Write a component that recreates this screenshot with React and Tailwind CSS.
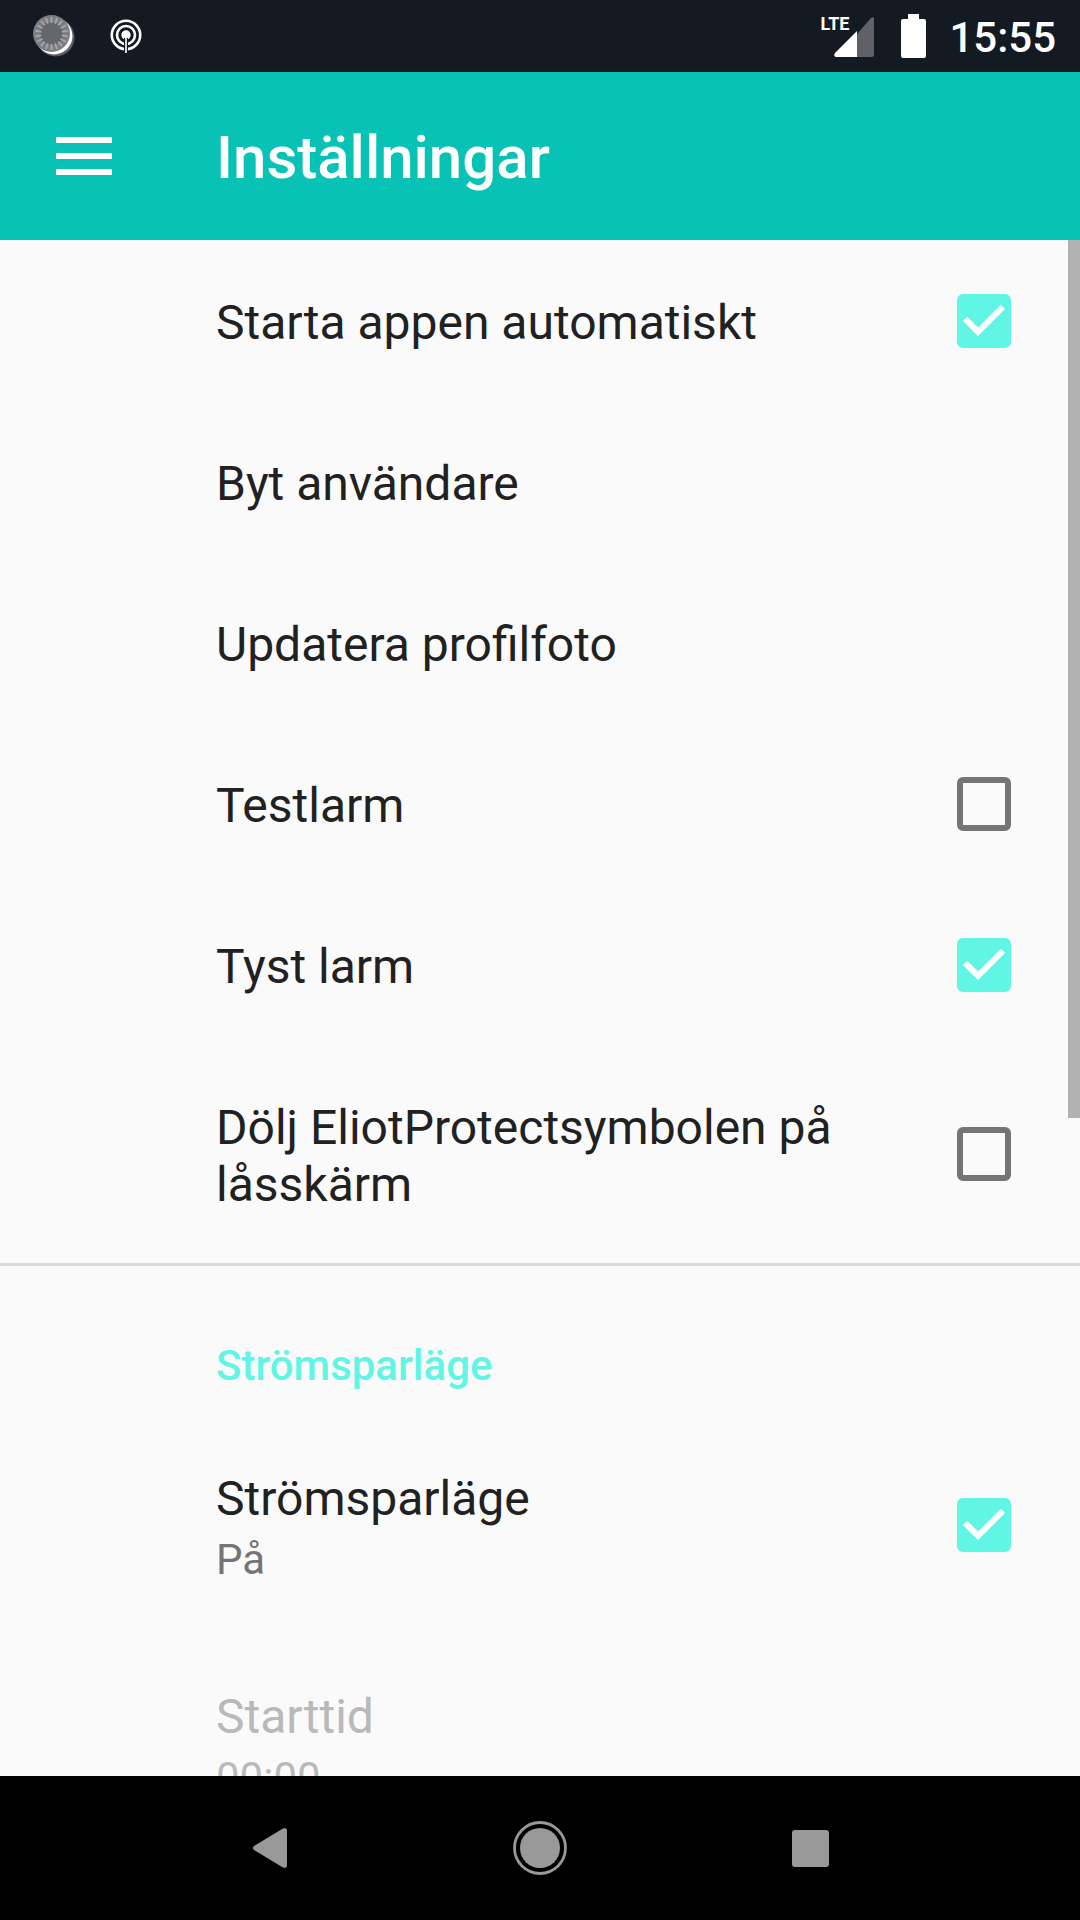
import React, { useState } from 'react';

const items = [
    { id: 'autostart', title: 'Starta appen automatiskt', checkbox: true },
    { id: 'switch-user', title: 'Byt användare' },
    { id: 'photo', title: 'Updatera profilfoto' },
    { id: 'test-alarm', title: 'Testlarm', checkbox: true },
    { id: 'silent-alarm', title: 'Tyst larm', checkbox: true },
    { id: 'hide-symbol', title: 'Dölj EliotProtectsymbolen på låsskärm', checkbox: true },
];

const powerItems = [
    { id: 'power-save', title: 'Strömsparläge', checkbox: true, summary: 'På' },
    { id: 'start-time', title: 'Starttid', summary: '00:00', disabled: true },
];

const ticks = Array.from({ length: 18 }, (_, i) => i * 20);

const StatusBar = () => (
    <div className="flex h-[72px] shrink-0 items-center justify-between bg-[#141a22] pr-6 pl-8 text-white">
        <div className="flex items-center gap-8">
            <svg className="h-12 w-11" viewBox="0 0 44 48" aria-hidden="true">
                <circle cx="23.500" cy="25.500" r="19" fill="#5a5e63" />
                <circle cx="22" cy="24" r="18.500" fill="#fff" />
                <circle cx="19.500" cy="21.500" r="18.500" fill="#7b7d80" />
                <circle cx="19.500" cy="21.500" r="12" fill="#65676a" />
                {ticks.map((angle) => (
                    <path key={angle} d="M19.500 5v6" stroke="#a5a6a8" strokeWidth="2" transform={`rotate(${angle} 19.5 21.5)`} />
                ))}
            </svg>
            <svg className="h-9 w-9" viewBox="0 0 36 36" fill="none" stroke="#fff" aria-hidden="true">
                <circle cx="18" cy="17" r="14.2" strokeWidth="2.6" />
                <circle cx="18" cy="17" r="9" strokeWidth="2.6" />
                <circle cx="18" cy="17" r="4.7" fill="#fff" stroke="none" />
                <path d="M18 20v14" stroke="#141a22" strokeWidth="4" />
                <path d="M18 20v15" stroke="#d5d7d9" strokeWidth="2" />
            </svg>
        </div>
        <div className="flex items-center">
            <div className="relative mr-[27px] h-11 w-[54px]">
                <svg className="h-full w-full" viewBox="0 0 54 44" aria-hidden="true">
                    <path d="M37 20L51 4Q54 2 54 5V41Q54 43 52 43H37z" fill="#5f6166" />
                    <path d="M37 17V43H16Q13 42 15 39z" fill="#fff" />
                </svg>
                <span className="absolute top-0 left-0 text-[18px] leading-[20px] font-bold">LTE</span>
            </div>
            <svg className="mr-[23px] h-11 w-[25px]" viewBox="0 0 25 44" fill="#fff" aria-hidden="true">
                <path d="M7 0h11v5h5q2 0 2 2v35q0 2-2 2H2q-2 0-2-2V7q0-2 2-2h5z" />
            </svg>
            <time className="pt-[3px] text-[42px] leading-[49px] font-medium">15:55</time>
        </div>
    </div>
);

const Checkbox = ({ id, checked, onChange }) => (
    <span className="grid shrink-0">
        <input
            id={id}
            type="checkbox"
            checked={checked}
            onChange={onChange}
            className="col-start-1 row-start-1 h-[54px] w-[54px] appearance-none rounded-md border-[6px] border-[#757575] checked:border-[#61f5e5] checked:bg-[#61f5e5]"
        />
        {checked && (
            <svg className="pointer-events-none col-start-1 row-start-1 h-[54px] w-[54px]" viewBox="3 3 18 18" fill="#fff" aria-hidden="true">
                <path d="M10 17l-5-5 1.41-1.41L10 14.17l7.59-7.59L19 8l-9 9z" />
            </svg>
        )}
    </span>
);

const SettingRow = ({ item, checked, onToggle }) => {
    const titleColor = item.disabled ? 'text-[#b9b9b9]' : 'text-[#212121]';
    const summaryColor = item.disabled ? 'text-[#b9b9b9]' : 'text-[#757575]';

    const text = (
        <span className="flex min-w-0 flex-1 flex-col pt-[54px] pb-[50px]">
            <span className={`text-[48px] leading-[57px] ${titleColor}`}>{item.title}</span>
            {item.summary && <span className={`mt-2 text-[42px] leading-[49px] ${summaryColor}`}>{item.summary}</span>}
        </span>
    );

    if (!item.checkbox) {
        return (
            <button type="button" disabled={item.disabled} className="flex w-full items-center pr-[69px] pl-[216px] text-left">
                {text}
            </button>
        );
    }

    return (
        <label htmlFor={item.id} className="flex items-center gap-12 pr-[69px] pl-[216px]">
            {text}
            <Checkbox id={item.id} checked={checked} onChange={() => onToggle(item.id)} />
        </label>
    );
};

const NavBar = () => (
    <nav className="grid h-36 shrink-0 grid-cols-3 bg-black px-[12.5%]">
        <button type="button" aria-label="Tillbaka" className="flex items-center justify-center">
            <svg className="h-[54px] w-[54px]" viewBox="0 0 54 54" fill="#999">
                <path d="M11 25L40 7.600Q44 6 44 10V44Q44 48 40 46.400L11 29Q9 27 11 25z" />
            </svg>
        </button>
        <button type="button" aria-label="Hem" className="flex items-center justify-center">
            <svg className="h-[54px] w-[54px]" viewBox="0 0 54 54">
                <circle cx="27" cy="27" r="25.500" fill="none" stroke="#999" strokeWidth="2.800" />
                <circle cx="27" cy="27" r="20" fill="#999" />
            </svg>
        </button>
        <button type="button" aria-label="Översikt" className="flex items-center justify-center">
            <span className="h-[37px] w-[37px] rounded-[3px] bg-[#999]" />
        </button>
    </nav>
);

const App = () => {
    const [values, setValues] = useState({
        autostart: true,
        'test-alarm': false,
        'silent-alarm': true,
        'hide-symbol': false,
        'power-save': true,
    });

    const toggle = (id) => setValues({ ...values, [id]: !values[id] });

    return (
        <div className="flex h-screen flex-col overflow-hidden bg-[#fafafa] font-['Roboto',sans-serif]">
            <StatusBar />
            <header className="flex h-[168px] shrink-0 items-center bg-[#08c2b6] pl-[56px] text-white">
                <button type="button" aria-label="Meny" className="mr-[104px] flex w-14 flex-col gap-[10px]">
                    <span className="h-[6px] w-full bg-white" />
                    <span className="h-[6px] w-full bg-white" />
                    <span className="h-[6px] w-full bg-white" />
                </button>
                <h1 className="pt-1 text-[60px] leading-[70px] font-medium">Inställningar</h1>
            </header>

            <main className="relative min-h-0 flex-1 overflow-hidden">
                <section className="border-b-[3px] border-[#dadbdb]">
                    {items.map((item) => (
                        <SettingRow key={item.id} item={item} checked={values[item.id]} onToggle={toggle} />
                    ))}
                </section>
                <section>
                    <h2 className="pt-[75px] pb-[26px] pl-[216px] text-[42px] leading-[49px] font-medium text-[#61f5e5]">Strömsparläge</h2>
                    {powerItems.map((item) => (
                        <SettingRow key={item.id} item={item} checked={values[item.id]} onToggle={toggle} />
                    ))}
                </section>
                {/* scroll thumb */}
                <div className="absolute top-0 right-0 h-4/7 w-3 bg-[#b2b2b2]" />
            </main>

            <NavBar />
        </div>
    );
};

export default App;
